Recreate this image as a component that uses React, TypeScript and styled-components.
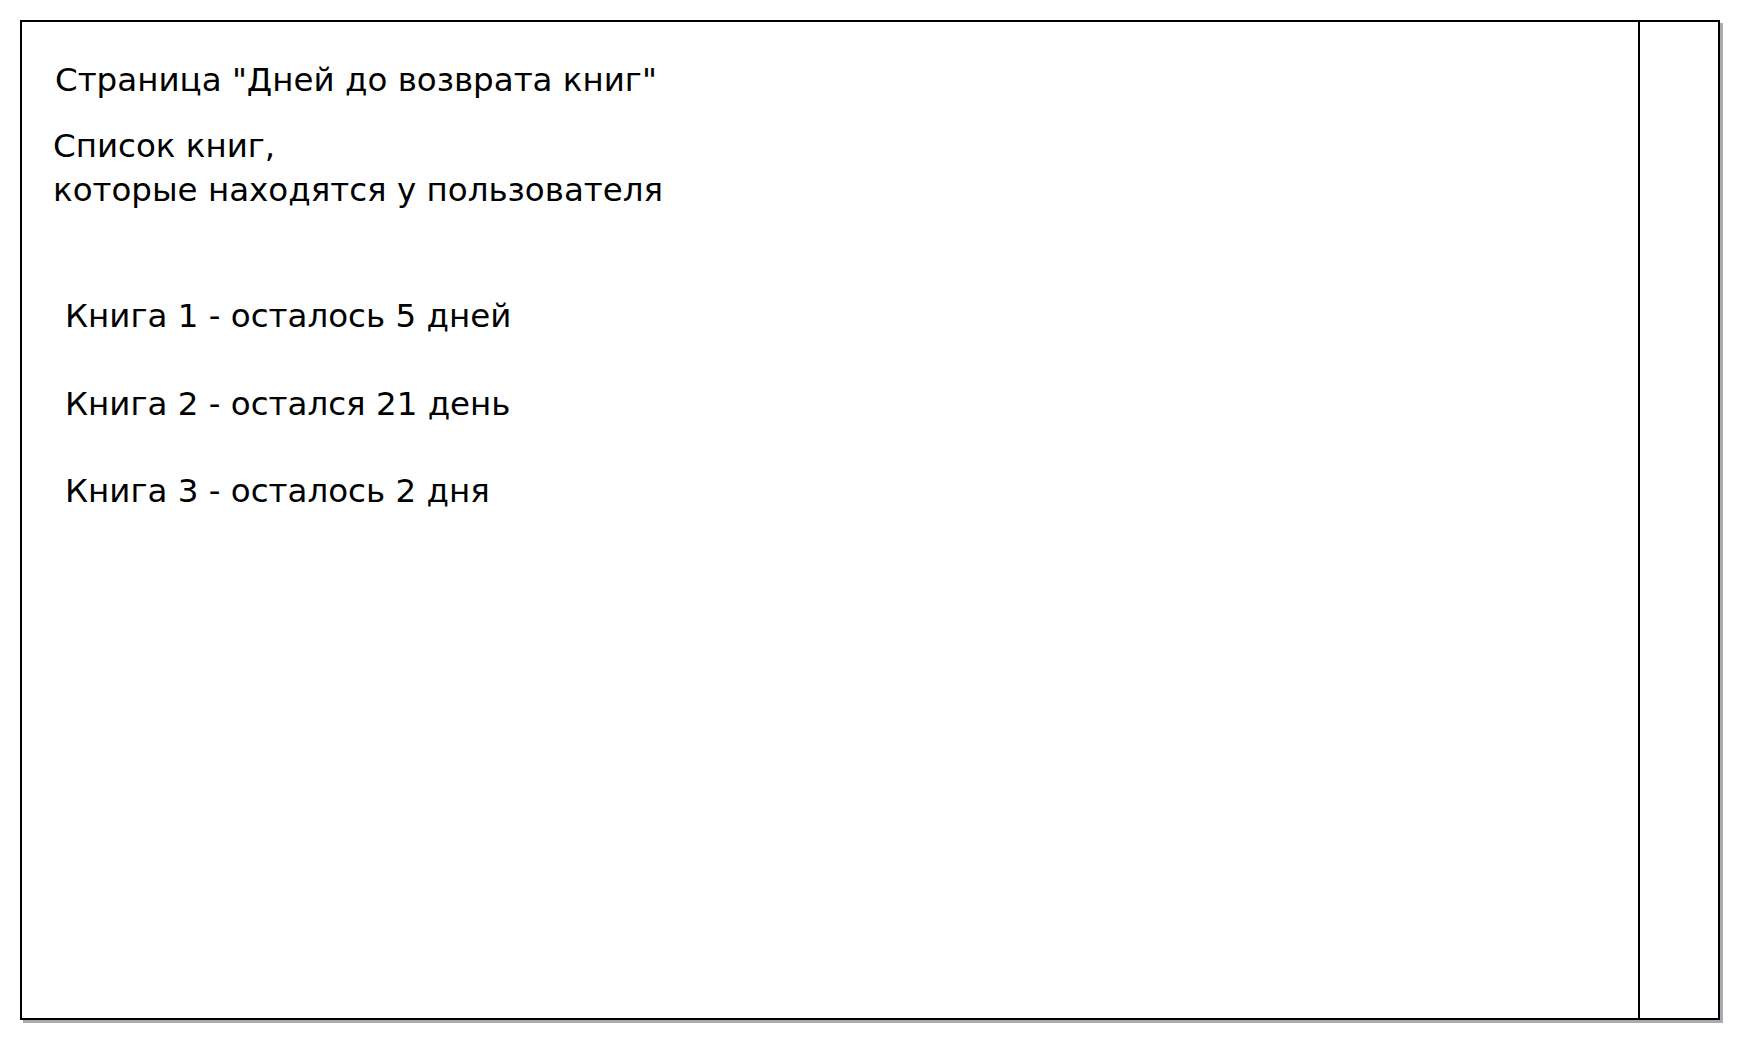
import styled, { createGlobalStyle } from 'styled-components'

const GlobalStyle = createGlobalStyle`
  html, body {
    margin: 0;
    padding: 0;
    background: #fff;
  }
  body {
    font-family: "DejaVu Sans", Verdana, sans-serif;
    color: #000;
  }
`

const Page = styled.div`
  padding: 20px;
  width: 1740px;
  height: 1040px;
  box-sizing: border-box;
`

const Frame = styled.div`
  display: grid;
  grid-template-columns: 1fr 80px;
  width: 1700px;
  height: 1000px;
  box-sizing: border-box;
  border: 2px solid #000;
  box-shadow: 3px 3px 0 #a8acb0;
  background: #fff;
`

const Main = styled.main`
  padding: 36px 0 0 31px;
  font-size: 32.5px;
  line-height: 44px;
`

const Side = styled.aside`
  border-left: 2px solid #000;
`

const Title = styled.h1`
  margin: 0 0 22px 2px;
  font-size: inherit;
  font-weight: normal;
`

const Intro = styled.p`
  margin: 0;
`

const BookList = styled.ul`
  list-style: none;
  margin: 82px 0 0;
  padding: 0 0 0 12px;
  display: flex;
  flex-direction: column;
  gap: 43.5px;
`

const BookItem = styled.li`
  margin: 0;
`

const books = [
  { name: 'Книга 1', left: 'осталось 5 дней' },
  { name: 'Книга 2', left: 'остался 21 день' },
  { name: 'Книга 3', left: 'осталось 2 дня' },
]

function App() {
  return (
    <>
      <GlobalStyle />
      <Page>
        <Frame>
          <Main>
            <Title>Страница "Дней до возврата книг"</Title>
            <Intro>
              Список книг,
              <br />
              которые находятся у пользователя
            </Intro>
            <BookList>
              {books.map((b) => (
                <BookItem key={b.name}>
                  {b.name} - {b.left}
                </BookItem>
              ))}
            </BookList>
          </Main>
          <Side />
        </Frame>
      </Page>
    </>
  )
}

export default App
